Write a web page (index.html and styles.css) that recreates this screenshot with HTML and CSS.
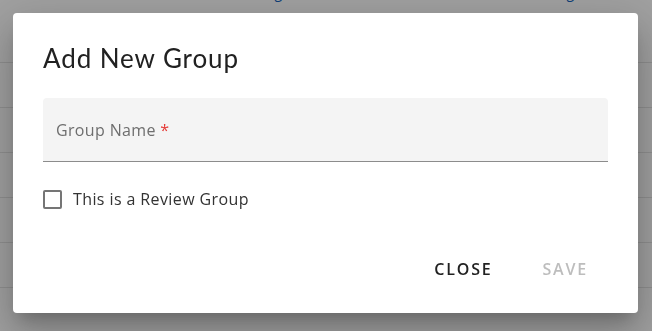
FILE: index.html
```html
<!DOCTYPE html>
<html lang="en">
<head>
<meta charset="utf-8">
<title>Add New Group</title>
<link rel="stylesheet" href="styles.css">
</head>
<body>
<div class="page">
  <div class="head-row">
    <span class="cell-a link">Testing</span>
    <span class="cell-b link">Testing</span>
  </div>
  <div class="row"><span class="cell-a link">Group</span><span class="cell-b link">Group</span></div>
  <div class="row"><span class="cell-a link">Group</span><span class="cell-b link">Group</span></div>
  <div class="row"><span class="cell-a link">Group</span><span class="cell-b link">Group</span></div>
  <div class="row"><span class="cell-a link">Group</span><span class="cell-b link">Group</span></div>
  <div class="row"><span class="cell-a link">Group</span><span class="cell-b link">Group</span></div>
  <div class="row"><span class="cell-a link">Reading</span><span class="cell-b link">Group |</span></div>
</div>
<div class="overlay"></div>
<div class="dialog" role="dialog" aria-labelledby="dlg-title">
  <h2 class="dialog-title" id="dlg-title">Add New Group</h2>
  <div class="field">
    <label class="field-label">Group Name <span class="req">*</span></label>
  </div>
  <label class="check-row">
    <span class="checkbox"></span>
    <span class="check-text">This is a Review Group</span>
  </label>
  <div class="actions">
    <button class="btn btn-close">Close</button>
    <button class="btn btn-save" disabled>Save</button>
  </div>
</div>
</body>
</html>
```
FILE: styles.css
```css
html, body {
  margin: 0;
  padding: 0;
  width: 652px;
  height: 331px;
  overflow: hidden;
  background: #fff;
  font-family: "Open Sans", "Liberation Sans", sans-serif;
}

.page {
  display: flex;
  flex-direction: column;
}

.head-row {
  height: 18px;
  overflow: hidden;
  display: flex;
  align-items: flex-end;
}

.row {
  height: 44px;
  border-bottom: 1px solid #e4e4e4;
  display: flex;
  align-items: center;
}

.head-row .cell-a,
.head-row .cell-b {
  margin-bottom: 16px;
}

.cell-a {
  width: 70px;
  margin-left: 212px;
  text-align: right;
}

.cell-b {
  width: 80px;
  margin-left: 212px;
  text-align: right;
}

.link {
  font-size: 14px;
  line-height: 18px;
  color: #1565c0;
}

.overlay {
  position: fixed;
  inset: 0;
  background: rgba(0, 0, 0, 0.37);
}

.dialog {
  position: absolute;
  left: 13px;
  top: 13px;
  width: 625px;
  height: 300px;
  box-sizing: border-box;
  background: #fff;
  border-radius: 4px;
  padding: 28px 30px 0;
  display: flex;
  flex-direction: column;
  box-shadow: 0 11px 15px -7px rgba(0,0,0,0.2), 0 24px 38px 3px rgba(0,0,0,0.14), 0 9px 46px 8px rgba(0,0,0,0.12);
}

.dialog-title {
  margin: 0;
  font-family: "Lato", "Open Sans", sans-serif;
  font-size: 26px;
  letter-spacing: 0.9px;
  line-height: 34px;
  font-weight: 400;
  color: #212121;
}

.field {
  margin-top: 23px;
  height: 63px;
  background: #f4f4f4;
  border-radius: 4px 4px 0 0;
  border-bottom: 1px solid #8c8c8c;
  display: flex;
  align-items: center;
  padding-left: 13px;
}

.field-label {
  font-size: 16px;
  letter-spacing: 0.35px;
  color: #6e6e6e;
}

.req {
  color: #e53935;
}

.check-row {
  margin-top: 25px;
  height: 24px;
  display: flex;
  align-items: center;
  gap: 11px;
}

.checkbox {
  width: 15px;
  height: 15px;
  border: 2px solid #757575;
  border-radius: 2px;
  box-sizing: content-box;
}

.check-text {
  font-size: 16px;
  letter-spacing: 0.4px;
  color: #333;
}

.actions {
  margin-top: 40px;
  display: flex;
  justify-content: flex-end;
  gap: 18px;
  padding-right: 4px;
}

.btn {
  border: 0;
  background: transparent;
  font-family: "Open Sans", "Liberation Sans", sans-serif;
  font-size: 16px;
  font-weight: 600;
  text-transform: uppercase;
  letter-spacing: 1.8px;
  padding: 0 16px;
  height: 36px;
  line-height: 36px;
}

.btn-close {
  color: #212121;
}

.btn-save {
  color: #bdbdbd;
}
```
